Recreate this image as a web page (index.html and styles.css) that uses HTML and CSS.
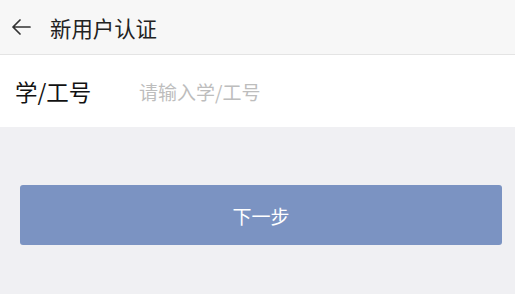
FILE: index.html
```html
<!DOCTYPE html>
<html lang="zh">
<head>
<meta charset="utf-8">
<link rel="stylesheet" href="styles.css">
</head>
<body>
<header class="topbar">
  <span class="back">
    <svg width="20" height="16" viewBox="0 0 20 16"><path d="M19 8H2M9 1L2 8l7 7" fill="none" stroke="#333" stroke-width="1.7" stroke-linecap="round" stroke-linejoin="round"/></svg>
  </span>
  <h1 class="title">新用户认证</h1>
</header>
<div class="field">
  <label class="label">学/工号</label>
  <span class="placeholder">请输入学/工号</span>
</div>
<div class="actions">
  <button class="next">下一步</button>
</div>
</body>
</html>
```
FILE: styles.css
```css
html, body {
  margin: 0;
  padding: 0;
  background: #f0f0f3;
  font-family: "Noto Sans CJK SC", "Noto Sans", sans-serif;
}
.topbar {
  height: 54px;
  background: #f7f7f7;
  border-bottom: 1px solid #e4e4e4;
  display: flex;
  align-items: center;
  padding-left: 11px;
}
.back {
  display: flex;
  width: 20px;
  height: 16px;
}
.title {
  margin: 0 0 0 19px;
  font-size: 21.4px;
  font-weight: normal;
  color: #222;
}
.field {
  height: 72px;
  background: #fff;
  display: flex;
  align-items: center;
  padding-left: 15px;
}
.label {
  width: 124px;
  font-size: 22.5px;
  color: #111;
}
.placeholder {
  font-size: 19px;
  color: #bdbdbd;
}
.actions {
  padding: 58px 13px 0 20px;
}
.next {
  display: block;
  width: 100%;
  height: 60px;
  border: none;
  border-radius: 3px;
  background: #7b93c2;
  color: #fff;
  font-family: inherit;
  font-size: 19px;
  padding: 0;
}
```
